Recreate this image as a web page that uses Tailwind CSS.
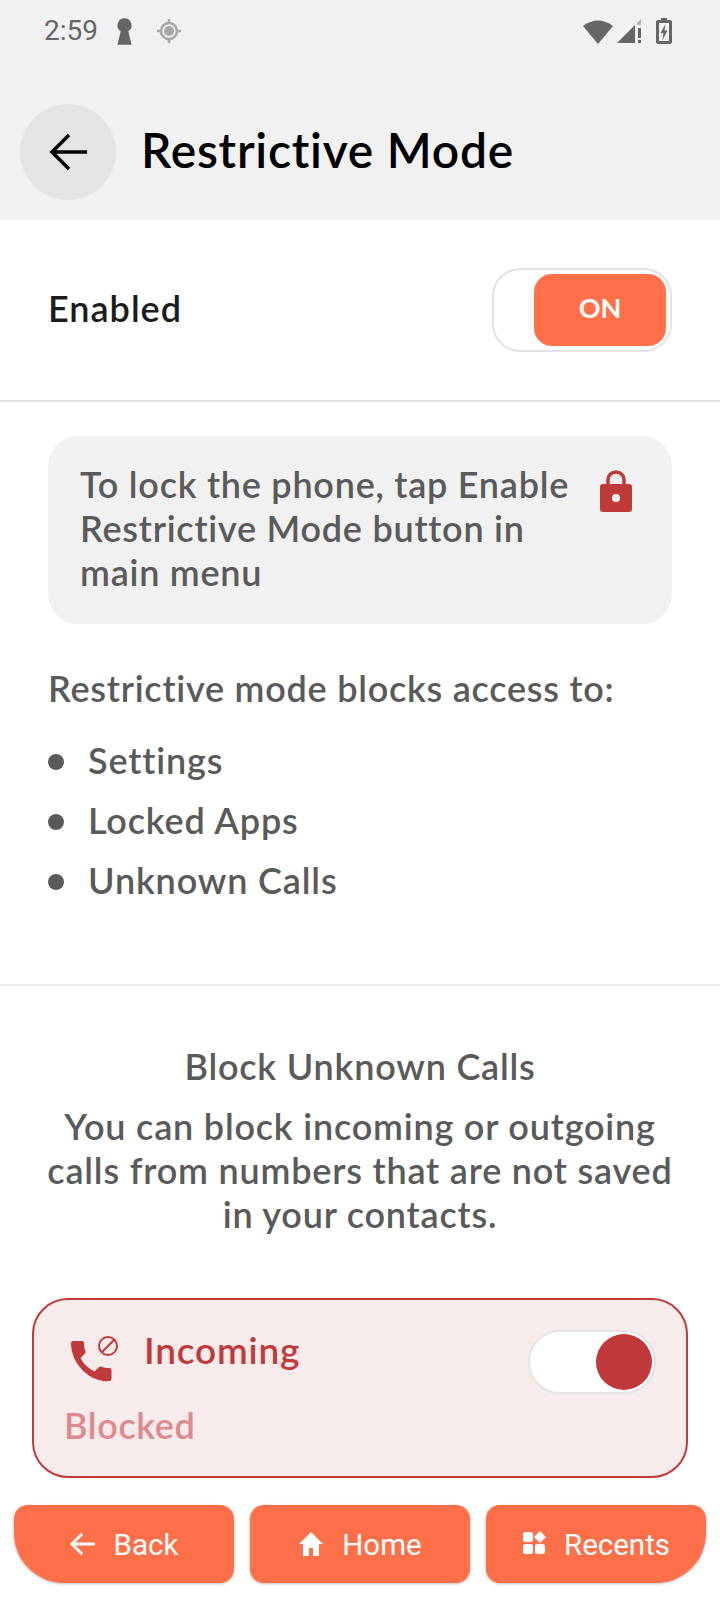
<!DOCTYPE html>
<html lang="en">
<head>
<meta charset="UTF-8">
<meta name="viewport" content="width=device-width, initial-scale=1.0">
<title>Restrictive Mode</title>
<script src="https://cdn.jsdelivr.net/npm/@tailwindcss/browser@4"></script>
</head>
<body class="bg-white font-['Lato',sans-serif]">
<div class="w-[720px] h-[1600px] flex flex-col overflow-hidden">

  <!-- status bar + header -->
  <div class="h-[220px] bg-[#f1f1f1] flex flex-col shrink-0">
    <div class="h-[62px] pl-[44px] pr-[48px] flex items-center justify-between">
      <div class="flex items-center">
        <span class="font-['Roboto',sans-serif] text-[28px] text-[#666666]">2:59</span>
        <svg class="ml-[18px] w-[17px] h-[29px]" viewBox="0 0 18 30" fill="#666666"><path d="M9 1a7.500 7.500 0 0 1 4 13.800L16.500 29H1.500L5 14.800A7.500 7.500 0 0 1 9 1z"/></svg>
        <svg class="ml-[23px] w-[26px] h-[26px]" viewBox="0 0 26 26" fill="none" stroke="#a8a8a8" stroke-width="2.500"><circle cx="13" cy="13" r="8"/><circle cx="13" cy="13" r="5" fill="#a8a8a8" stroke="none"/><path d="M13 1v4M13 21v4M1 13h4M21 13h4"/></svg>
      </div>
      <div class="flex items-center">
        <svg class="w-[32px] h-[26px]" viewBox="0 0 32 26" fill="#666666"><path d="M1 8Q16-3 31 8L16 26z"/></svg>
        <svg class="ml-[2px] w-[26px] h-[26px]" viewBox="0 0 26 26" fill="#666666"><path d="M1 25L19 7V25z"/><path d="M21 5l4-4v6h-4z" fill="#b0b0b0"/><path d="M22 10h3v10h-3zM22 22h3v3h-3z"/></svg>
        <svg class="ml-[14px] w-[16px] h-[26px]" viewBox="0 0 16 26"><path d="M5 0h6v2h3a2 2 0 0 1 2 2v20a2 2 0 0 1-2 2H2a2 2 0 0 1-2-2V4a2 2 0 0 1 2-2h3z" fill="#666666"/><path d="M3 5h10v18H3z" fill="#f1f1f1"/><path d="M9.500 6L4.500 15H7.500L6.500 22L11.500 12.500H8.500z" fill="#666666"/></svg>
      </div>
    </div>
    <div class="flex items-center pl-[20px] mt-[42px]">
      <div class="w-[96px] h-[96px] rounded-full bg-[#e5e5e5] flex items-center justify-center">
        <svg class="w-[40px] h-[40px] ml-[2px]" viewBox="0 0 40 40" fill="none" stroke="#000" stroke-width="3.500"><path d="M38 20H3M20 3L3 20L20 37"/></svg>
      </div>
      <h1 class="ml-[25px] mb-[4px] text-[48px] font-semibold tracking-[0.75px] text-black">Restrictive Mode</h1>
    </div>
  </div>

  <!-- enabled row -->
  <div class="h-[182px] shrink-0 border-b-2 border-[#e2e2e2] pl-[48px] pr-[48px] flex items-center justify-between">
    <span class="text-[36px] font-semibold tracking-[1px] text-[#1c1c1c] mb-[4px]">Enabled</span>
    <div class="w-[180px] h-[84px] rounded-[28px] border-2 border-[#e2e2e2] flex items-center justify-end pr-[4px]">
      <div class="w-[132px] h-[72px] pb-[3px] rounded-[18px] bg-[#ff704a] text-white text-[27px] font-bold flex items-center justify-center">ON</div>
    </div>
  </div>

  <!-- info -->
  <div class="mx-[48px] mt-[34px] h-[188px] rounded-[30px] bg-[#f1f1f1] pl-[32px] pr-[40px] pt-[26px] flex items-start justify-between shrink-0">
    <p class="w-[500px] text-[36px] leading-[44px] font-semibold tracking-[0.75px] text-[#5a5a5a]">To lock the phone, tap Enable Restrictive Mode button in main menu</p>
    <svg class="w-[32px] h-[42px] mt-[8px]" viewBox="0 0 32 42"><path d="M8 17V10a8 8 0 0 1 16 0v7" fill="none" stroke="#c03a3c" stroke-width="3.500"/><path d="M3 14h26a3 3 0 0 1 3 3v22a3 3 0 0 1-3 3H3a3 3 0 0 1-3-3V17a3 3 0 0 1 3-3z" fill="#c03a3c"/><circle cx="16" cy="28" r="4" fill="#f1f1f1"/></svg>
  </div>

  <p class="ml-[48px] mt-[42px] text-[36px] leading-[44px] font-semibold tracking-[0.75px] text-[#5a5a5a]">Restrictive mode blocks access to:</p>
  <ul class="ml-[48px] mt-[20px] flex flex-col text-[36px] leading-[60px] font-semibold tracking-[0.85px] text-[#5a5a5a]">
    <li class="flex items-center gap-[24px]"><span class="w-[16px] h-[16px] mt-[4px] rounded-full bg-[#5a5a5a]"></span>Settings</li>
    <li class="flex items-center gap-[24px]"><span class="w-[16px] h-[16px] mt-[4px] rounded-full bg-[#5a5a5a]"></span>Locked Apps</li>
    <li class="flex items-center gap-[24px]"><span class="w-[16px] h-[16px] mt-[4px] rounded-full bg-[#5a5a5a]"></span>Unknown Calls</li>
  </ul>

  <div class="mt-[74px] border-t-2 border-[#ececec]"></div>

  <!-- block calls -->
  <div class="mt-[58px] px-[40px] text-center font-semibold text-[#5a5a5a] text-[36px] tracking-[0.8px] leading-[44px]">
    <p>Block Unknown Calls</p>
    <p class="mt-[16px]">You can block incoming or outgoing calls from numbers that are not saved in your contacts.</p>
  </div>

  <div class="relative mx-[32px] mt-[62px] h-[180px] rounded-[36px] border-2 border-[#c03a3c] bg-[#f8ebec] shrink-0 pl-[30px] pt-[28px]">
    <div class="flex items-start">
      <svg class="w-[48px] h-[48px] ml-[7px] mt-[8px]" viewBox="0 0 48 48" fill="#c03a3c"><path d="M2 5h9a2 2 0 0 1 2 2c0 3 .5 6 1.500 8.500.3.8 0 1.500-.5 2l-4.500 4.500c3 6 8 10.500 14 13.500l4.500-4.500c.6-.6 1.400-.7 2-.5 2.500 1 5.500 1.500 8.500 1.500a2 2 0 0 1 2 2v9a2 2 0 0 1-2 2C19 47 0 28 0 7a2 2 0 0 1 2-2z"/><circle cx="37" cy="10" r="9" fill="none" stroke="#c03a3c" stroke-width="2"/><path d="M31 16L43 4" stroke="#c03a3c" stroke-width="2"/></svg>
      <span class="ml-[25px] text-[37px] leading-[44px] font-semibold tracking-[0.8px] text-[#c03a3c]">Incoming</span>
    </div>
    <div class="mt-[14px] text-[36px] font-semibold tracking-[0.65px] text-[#de8a8c]">Blocked</div>
    <div class="absolute right-[30px] top-[30px] w-[128px] h-[64px] rounded-full bg-white border-2 border-[#e4e4e4] flex items-center justify-end pr-[2px]">
      <div class="w-[56px] h-[56px] rounded-full bg-[#c03a3c]"></div>
    </div>
  </div>

  <!-- nav buttons -->
  <div class="mt-[27px] px-[14px] grid grid-cols-3 gap-[16px] font-['Roboto',sans-serif] text-white text-[29.5px]">
    <div class="h-[78px] pt-[3px] bg-[#ff704a] rounded-[14px] rounded-bl-[50px] shadow-[0_1px_3px_rgba(0,0,0,0.25)] flex items-center justify-center gap-[18px]">
      <svg class="w-[26px] h-[24px] mb-[3px]" viewBox="0 0 26 24" fill="none" stroke="#fff" stroke-width="3"><path d="M25 12H3M12 2L2 12l10 10"/></svg>Back
    </div>
    <div class="h-[78px] pt-[3px] bg-[#ff704a] rounded-[14px] shadow-[0_1px_3px_rgba(0,0,0,0.25)] flex items-center justify-center gap-[18px]">
      <svg class="w-[26px] h-[26px] mb-[3px]" viewBox="0 0 26 26" fill="#fff"><path d="M13 1L1 13h4v11a1 1 0 0 0 1 1h5v-8h4v8h5a1 1 0 0 0 1-1V13h4z"/></svg>Home
    </div>
    <div class="h-[78px] pt-[3px] bg-[#ff704a] rounded-[14px] rounded-br-[50px] shadow-[0_1px_3px_rgba(0,0,0,0.25)] flex items-center justify-center gap-[18px]">
      <svg class="w-[24px] h-[24px] mb-[5px]" viewBox="0 0 24 24" fill="#fff"><rect x="1" y="1" width="10" height="10" rx="2.500"/><path d="M18 0l6 6-6 6-6-6z"/><rect x="1" y="13" width="10" height="10" rx="2.500"/><rect x="13" y="13" width="10" height="10" rx="2.500"/></svg>Recents
    </div>
  </div>
</div>
</body>
</html>
